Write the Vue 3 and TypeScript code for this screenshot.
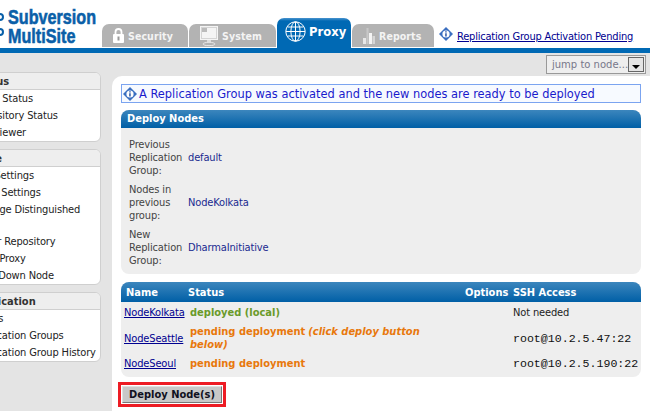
<template>
  <div class="page">
    <header class="top">
      <div class="logo">
        <div class="logo-dots"><i></i><i></i></div>
        <div class="logo-text"><span>Subversion</span><span>MultiSite</span></div>
      </div>
      <nav class="tabs">
        <a v-for="tab in tabs" :key="tab.name" class="tab" :class="{ active: tab.active }" :style="{ width: tab.width + 'px' }">
          <svg v-if="tab.name === 'Security'" width="11" height="15" viewBox="0 0 11 15">
            <path d="M2.500 7V4a3 3 0 0 1 6 0v3" fill="none" stroke="#fff" stroke-width="1.800" />
            <rect x="0" y="6" width="11" height="9" rx="1" fill="#fff" />
            <rect x="4.500" y="8.500" width="2" height="4" fill="#999" />
          </svg>
          <svg v-else-if="tab.name === 'System'" width="18" height="20" viewBox="0 0 18 20">
            <rect x="0.500" y="0.500" width="17" height="13" fill="#d4d4d4" stroke="#f4f4f4" />
            <rect x="2" y="2" width="14" height="10" fill="#f4f4f4" />
            <path d="M2 2h5v4H2z" fill="#bbb" />
            <path d="M7 14h4v2H7z" fill="#ddd" />
            <ellipse cx="9" cy="18" rx="6" ry="1.700" fill="none" stroke="#e8e8e8" />
          </svg>
          <svg v-else-if="tab.name === 'Proxy'" width="21" height="21" viewBox="0 0 21 21" fill="none" stroke="#fff" stroke-width="1">
            <circle cx="10.500" cy="10.500" r="9.700" />
            <ellipse cx="10.500" cy="10.500" rx="4.600" ry="9.700" />
            <path d="M10.500 1v19M1 10.500h19M2.400 6h16.200M2.400 15h16.200" />
          </svg>
          <svg v-else width="12" height="16" viewBox="0 0 12 16">
            <path d="M0 10h3v6H0z" fill="#e8e8e8" />
            <path d="M3.500 0h2v16h-2z" fill="#c8c8c8" />
            <path d="M6 5h3v11H6z" fill="#f4f4f4" />
            <path d="M9.500 8h2.500v8H9.500z" fill="#d6d6d6" />
          </svg>
          <span>{{ tab.name }}</span>
        </a>
      </nav>
      <svg class="info-big" width="14" height="14" viewBox="0 0 14 14">
        <path d="M7 0l7 7-7 7-7-7z" fill="#3b6fc0" />
        <circle cx="7" cy="7" r="3.600" fill="#fff" />
        <path d="M6.200 4.200h1.500v1.300H6.200zM6.200 6.200h1.500v3.400H6.200z" fill="#2a55a5" />
      </svg>
      <a class="pending">Replication Group Activation Pending</a>
    </header>
    <div class="bar"></div>

    <div class="body">
      <aside class="sidebar">
        <section v-for="group in menu" :key="group.title" class="panel">
          <h4>{{ group.title }}</h4>
          <ul>
            <li v-for="item in group.items" :key="item">{{ item }}</li>
          </ul>
        </section>
      </aside>

      <div class="right">
        <div class="toolbar">
          <div class="jump">
            <span>jump to node...</span>
            <b class="jump-btn"><i></i></b>
          </div>
        </div>

        <main class="content">
          <div class="notice">
            <svg width="14" height="14" viewBox="0 0 14 14">
              <path d="M7 0l7 7-7 7-7-7z" fill="#3b6fc0" />
              <circle cx="7" cy="7" r="3.600" fill="#fff" />
              <path d="M6.200 4.200h1.500v1.300H6.200zM6.200 6.200h1.500v3.400H6.200z" fill="#2a55a5" />
            </svg>
            <span>A Replication Group was activated and the new nodes are ready to be deployed</span>
          </div>

          <section class="card deploy">
            <h3>Deploy Nodes</h3>
            <dl>
              <template v-for="row in info" :key="row.label">
                <dt>{{ row.label }}</dt>
                <dd>{{ row.value }}</dd>
              </template>
            </dl>
          </section>

          <section class="card nodes">
            <table>
              <thead>
                <tr>
                  <th class="c-name">Name</th>
                  <th class="c-status">Status</th>
                  <th class="c-opt">Options</th>
                  <th class="c-ssh">SSH Access</th>
                </tr>
              </thead>
              <tbody>
                <tr v-for="node in nodes" :key="node.name">
                  <td class="c-name"><a>{{ node.name }}</a></td>
                  <td class="c-status">
                    <span :class="node.state">{{ node.status }}</span> <em v-if="node.note" :class="node.state">{{ node.note }}</em>
                  </td>
                  <td class="c-opt"></td>
                  <td class="c-ssh"><code v-if="node.mono">{{ node.ssh }}</code><template v-else>{{ node.ssh }}</template></td>
                </tr>
              </tbody>
            </table>
          </section>

          <div class="deploy-mark">
            <button type="button">Deploy Node(s)</button>
          </div>
        </main>
      </div>
    </div>
  </div>
</template>

<script setup lang="ts">
const tabs = [
  { name: 'Security', width: 86, active: false },
  { name: 'System', width: 87, active: false },
  { name: 'Proxy', width: 74, active: true },
  { name: 'Reports', width: 82, active: false },
]

const menu = [
  { title: 'Status', items: ['Proxy Status', 'Repository Status', 'Log Viewer'] },
  {
    title: 'Node',
    items: ['Site Settings', 'Node Settings', 'Manage Distinguished\nDNs', 'Mirror Repository', 'Start Proxy', 'Shut Down Node'],
  },
  { title: 'Replication', items: ['Nodes', 'Replication Groups', 'Replication Group History'] },
]

const info = [
  { label: 'Previous Replication Group:', value: 'default' },
  { label: 'Nodes in previous group:', value: 'NodeKolkata' },
  { label: 'New Replication Group:', value: 'DharmaInitiative' },
]

const nodes = [
  { name: 'NodeKolkata', state: 'ok', status: 'deployed (local)', note: '', ssh: 'Not needed', mono: false },
  {
    name: 'NodeSeattle',
    state: 'wait',
    status: 'pending deployment',
    note: '(click deploy button below)',
    ssh: 'root@10.2.5.47:22',
    mono: true,
  },
  { name: 'NodeSeoul', state: 'wait', status: 'pending deployment', note: '', ssh: 'root@10.2.5.190:22', mono: true },
]
</script>

<style>
html,
body {
  margin: 0;
  background: #e4e4e4;
}
</style>

<style scoped>
.page {
  width: 650px;
  height: 411px;
  overflow: hidden;
  background: #e4e4e4;
  font-family: "DejaVu Sans Condensed", "DejaVu Sans", sans-serif;
  font-size: 11px;
  color: #222;
}

/* header */
.top {
  height: 48px;
  background: #fff;
  display: flex;
  align-items: flex-end;
}
.logo {
  width: 102px;
  height: 48px;
  display: flex;
  flex-shrink: 0;
}
.logo-dots {
  width: 9px;
  padding-top: 13px;
  margin-left: -4px;
  margin-right: 4px;
}
.logo-dots i {
  display: block;
  width: 4px;
  height: 4px;
  border: 2px solid #0a5fa8;
  border-radius: 50%;
  margin-bottom: 7px;
}
.logo-text {
  padding-top: 7px;
  font-family: "Liberation Sans", sans-serif;
  font-weight: 700;
  font-size: 21px;
  line-height: 19px;
  color: #0a5fa8;
  transform: scaleX(0.77);
  transform-origin: left top;
  white-space: nowrap;
  -webkit-text-stroke: 0.6px #0a5fa8;
}
.logo-text span {
  display: block;
}
.tabs {
  display: flex;
  align-items: flex-end;
  gap: 1px;
  flex-shrink: 0;
}
.tab {
  height: 23px;
  margin-bottom: 1px;
  box-sizing: border-box;
  background: #b3b3b3;
  border-radius: 7px 7px 0 0;
  color: #f4f4f4;
  font-weight: 700;
  font-size: 10.500px;
  letter-spacing: 0.1px;
  display: flex;
  align-items: center;
  gap: 4px;
  padding-left: 11px;
}
.tab.active {
  height: 30px;
  margin-bottom: 0;
  background: linear-gradient(#4a94cf, #0069b4 3px);
  color: #fff;
  font-family: "DejaVu Sans", sans-serif;
  font-size: 11.600px;
  letter-spacing: 0;
  gap: 3px;
  padding-left: 8px;
  padding-bottom: 3px;
}
.info-big {
  margin: 0 0 7px 5px;
  flex-shrink: 0;
}
.pending {
  margin: 0 0 5px 4px;
  color: #000090;
  text-decoration: underline;
  white-space: nowrap;
  letter-spacing: -0.2px;
}
.bar {
  height: 5px;
  background: #0069b4;
}

.body {
  display: flex;
  gap: 11px;
}

/* sidebar is cut off on its left side */
.sidebar {
  width: 131px;
  margin-left: -30px;
  padding-top: 19px;
  flex-shrink: 0;
}
.panel {
  background: #fff;
  border: 1px solid #cfcfcf;
  border-radius: 6px;
  margin-bottom: 7px;
  overflow: hidden;
}
.panel h4 {
  margin: 0;
  height: 15px;
  padding: 1px 0 0 2px;
  background: #eeeeee;
  border-bottom: 1px solid #cfcfcf;
  font-size: 11px;
  line-height: 15px;
  color: #333;
}
.panel ul {
  margin: 0;
  padding: 0;
  list-style: none;
}
.panel li {
  padding: 1px 3px 1px 2px;
  line-height: 15px;
  color: #222;
  letter-spacing: -0.14px;
  white-space: pre-line;
}

.right {
  flex: 1;
  min-width: 0;
}
.toolbar {
  height: 23px;
  display: flex;
  justify-content: flex-end;
  align-items: center;
  padding-right: 4px;
}
.jump {
  width: 100px;
  height: 19px;
  box-sizing: border-box;
  border: 1px solid #999;
  background: #eee;
  display: flex;
  align-items: center;
  justify-content: space-between;
  padding: 0 1px 0 5px;
  font-family: "DejaVu Sans", sans-serif;
  font-size: 10px;
  color: #77778a;
  white-space: nowrap;
}
.jump-btn {
  width: 16px;
  height: 15px;
  box-sizing: border-box;
  border: 1px solid #666;
  background: #e4e4e4;
  display: flex;
  align-items: flex-end;
  justify-content: center;
  padding-bottom: 2px;
}
.jump-btn i {
  width: 0;
  height: 0;
  border-left: 4px solid transparent;
  border-right: 4px solid transparent;
  border-top: 4px solid #000;
}

.content {
  background: #fff;
  border-radius: 10px 0 0 0;
  padding: 8px 9px 0;
  height: 335px;
}
.notice {
  height: 19px;
  box-sizing: border-box;
  border: 1px solid #7ba4f0;
  background: #f7faff;
  display: flex;
  align-items: center;
  gap: 2px;
  padding-left: 1px;
  color: #1a1acc;
  font-family: "DejaVu Sans", sans-serif;
  font-size: 11.420px;
  white-space: nowrap;
  margin-bottom: 7px;
}
.card {
  background: #eeeeee;
  border-radius: 8px;
  overflow: hidden;
  margin-bottom: 8px;
}
.card h3 {
  margin: 0;
  height: 18px;
  padding-left: 6px;
  background: linear-gradient(#3c86bd, #005fa6);
  color: #fff;
  font-size: 11px;
  line-height: 18px;
}
.deploy dl {
  margin: 0;
  padding: 10px 8px 7px;
  display: grid;
  grid-template-columns: 59px 1fr;
  row-gap: 6px;
  align-items: center;
  line-height: 13px;
  letter-spacing: -0.14px;
}
.deploy dt {
  color: #444;
  width: 56px;
}
.deploy dd {
  margin: 0;
  color: #1a2a90;
}
.nodes {
  padding-bottom: 4px;
}

table {
  width: 100%;
  border-collapse: collapse;
  table-layout: fixed;
}
thead tr {
  height: 20px;
  background: linear-gradient(#3c86bd, #005fa6);
}
th {
  color: #fff;
  text-align: left;
  font-size: 11px;
  padding: 0;
}
td {
  padding: 3px 0;
  line-height: 13px;
  vertical-align: middle;
  letter-spacing: -0.14px;
}
tbody tr:first-child td {
  padding-top: 4px;
}
.c-name {
  width: 62px;
  padding-left: 3px;
}
th.c-name {
  padding-left: 5px;
}
td.c-status {
  padding-left: 2px;
  padding-right: 20px;
}
.c-opt {
  width: 48px;
}
.c-ssh {
  width: 128px;
}
td a {
  color: #000090;
  text-decoration: underline;
}
td .ok,
td .wait {
  font-weight: 700;
  letter-spacing: 0;
}
.ok {
  color: #6a9a2a;
}
.wait {
  color: #e8780c;
}
code {
  font-family: "Liberation Mono", monospace;
  font-size: 11.600px;
  letter-spacing: 0;
  color: #111;
}
.deploy-mark {
  width: 108px;
  height: 25px;
  box-sizing: border-box;
  border: 3px solid #ed1c24;
  margin: -3px 0 0 -3px;
  padding: 1px;
  background: #fff;
}
.deploy-mark button {
  display: block;
  width: 100px;
  height: 17px;
  margin: 0;
  box-sizing: border-box;
  border: 1px solid;
  border-color: #e0e0e0 #777 #777 #e0e0e0;
  background: #c8c8c8;
  padding: 0;
  font-family: "DejaVu Sans Condensed", sans-serif;
  font-weight: 700;
  font-size: 11px;
  line-height: 15px;
  color: #101020;
}
</style>
